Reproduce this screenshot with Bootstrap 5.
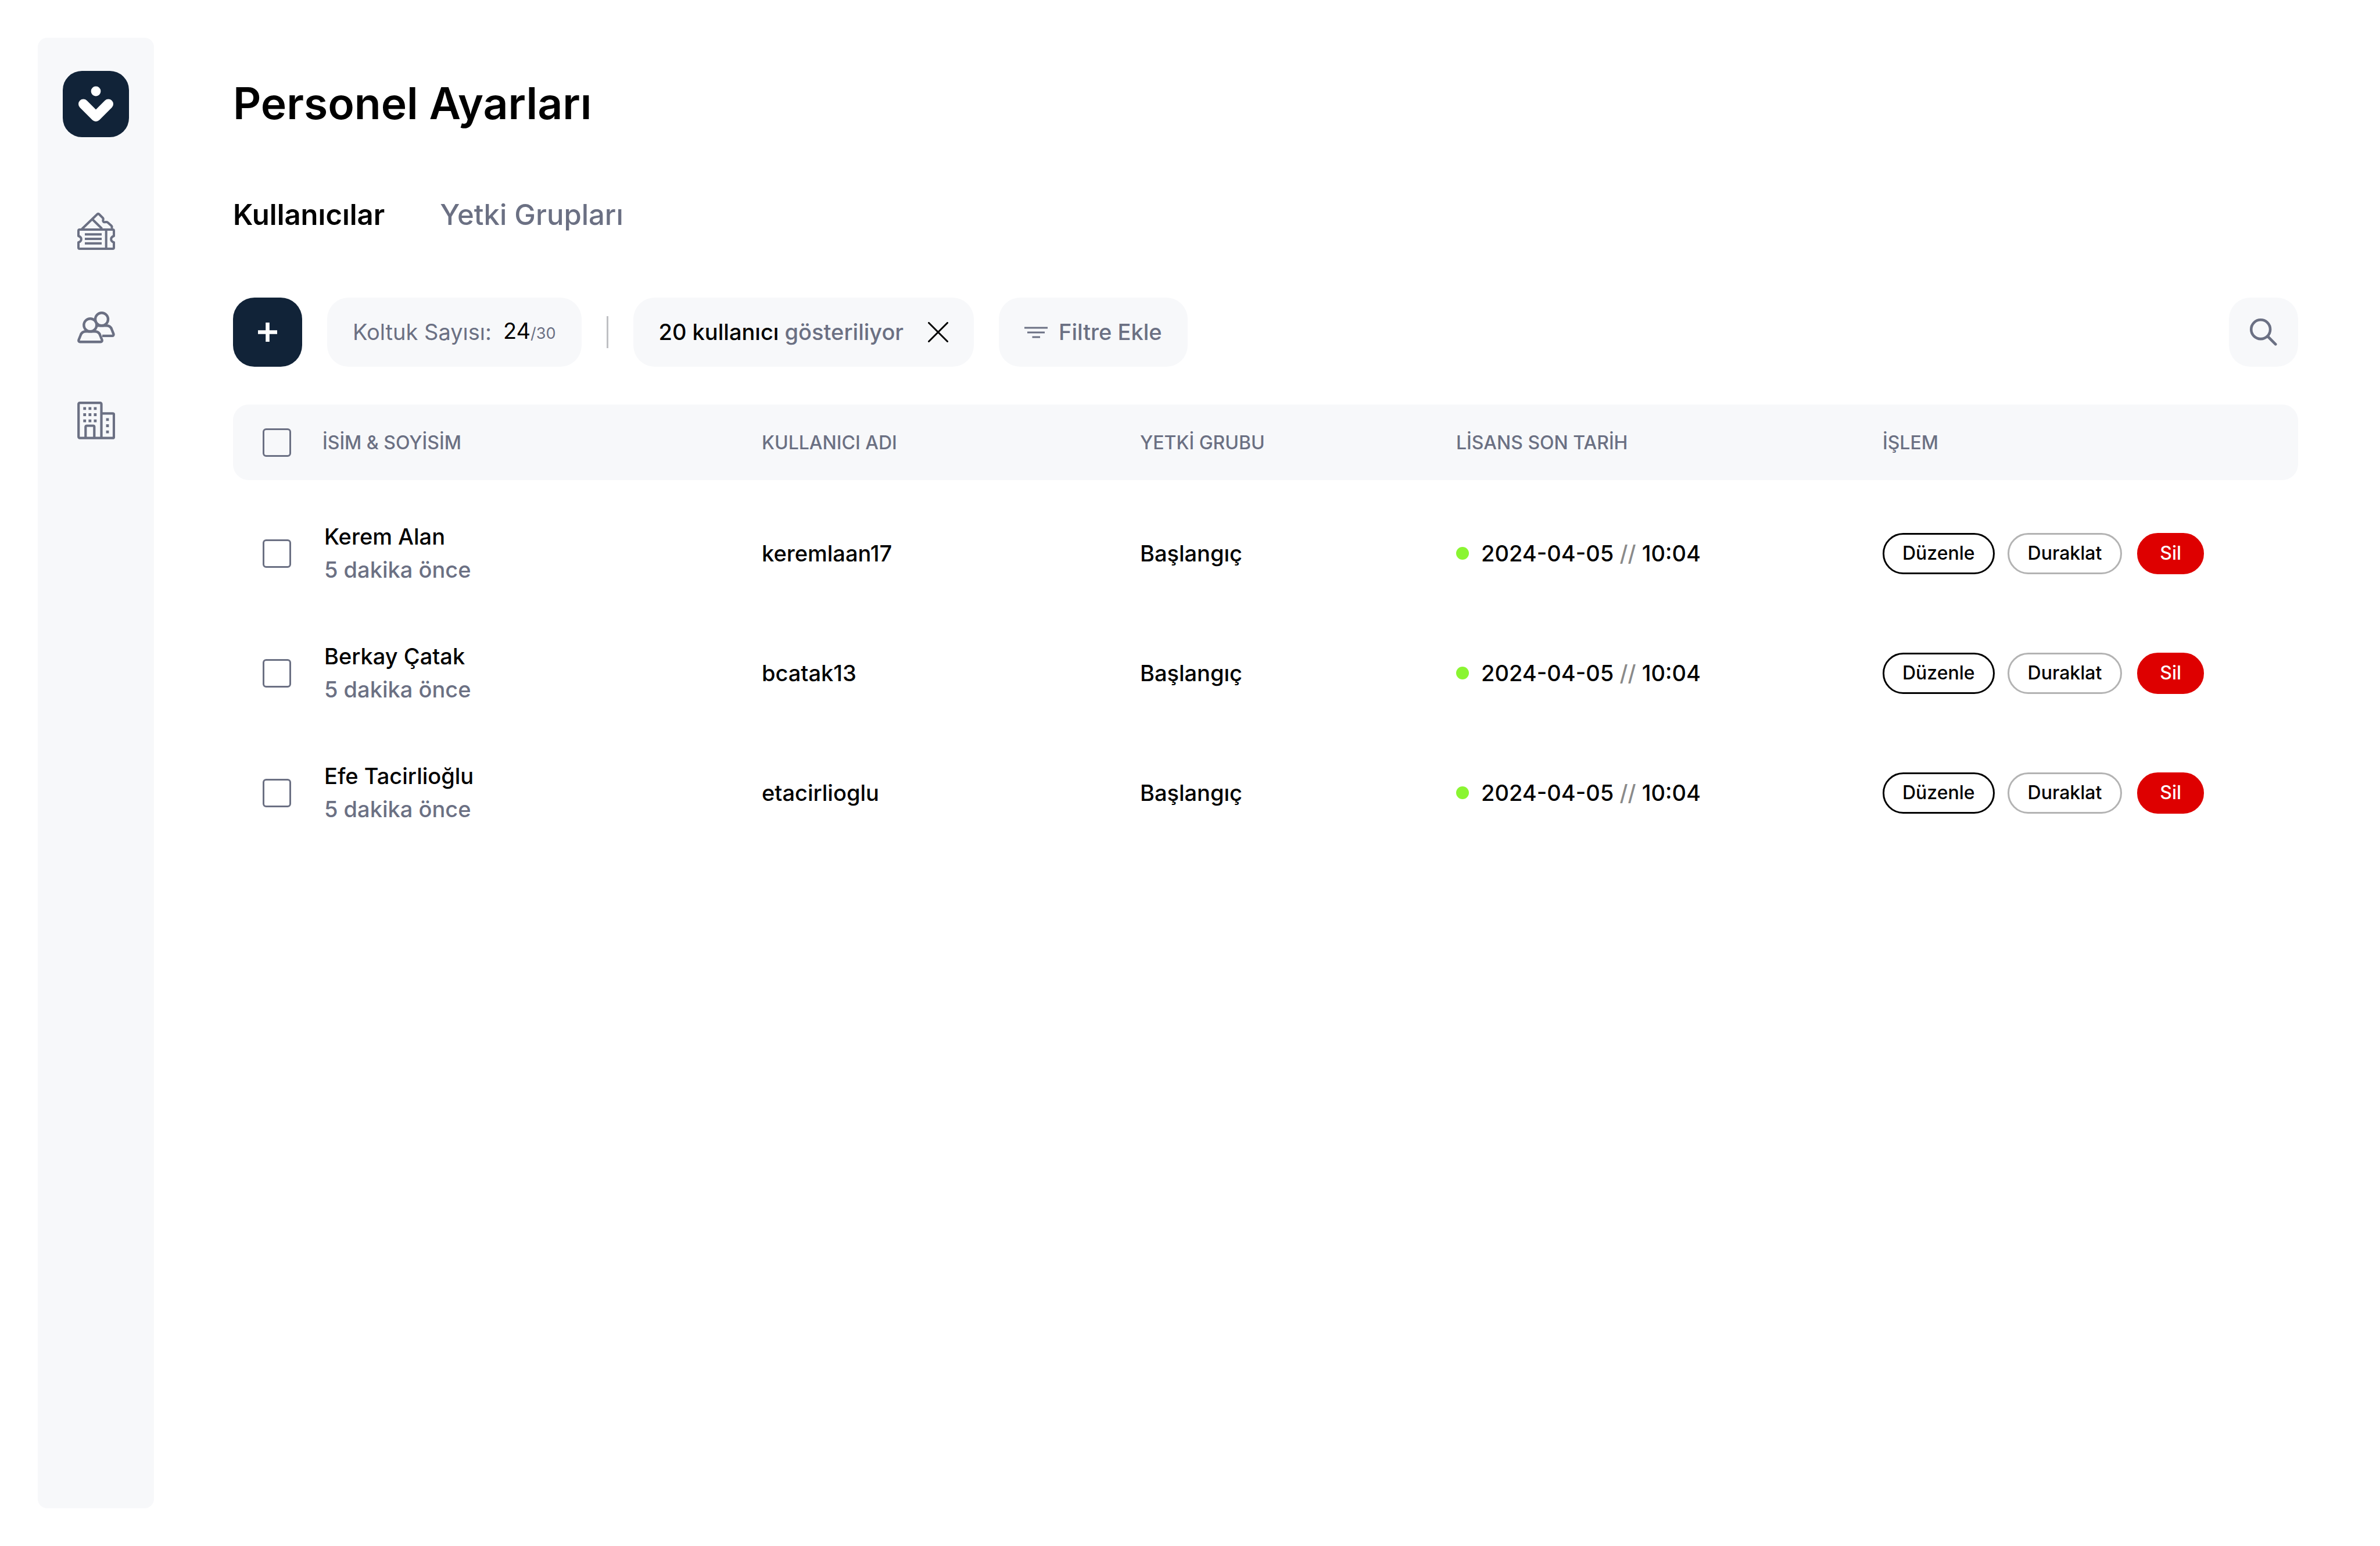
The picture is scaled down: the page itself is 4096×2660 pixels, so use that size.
<!DOCTYPE html>
<html lang="tr">
<head>
<meta charset="utf-8">
<meta name="viewport" content="width=device-width, initial-scale=1">
<title>Personel Ayarları</title>
<link href="https://cdn.jsdelivr.net/npm/bootstrap@5.3.0/dist/css/bootstrap.min.css" rel="stylesheet">
<style>
  :root { --ink: #000; --navy: #112338; --slate: #6b7083; --panel: #f7f8fa; }
  body { font-family: Inter, "Liberation Sans", sans-serif; font-size: 38px; line-height: 57px; font-weight: 500; color: var(--ink); background: #fff; }
  svg { display: block; flex: none; }
  .text-slate { color: var(--slate); }

  .app-shell { padding: 65px; gap: 136px; }
  .side-panel { flex: 0 0 200px; padding: 57px 0; background: var(--panel); border-radius: 16px; gap: 129px; }
  .side-links { gap: 100px; }
  .side-links a { color: var(--slate); }

  .page-body { min-width: 0; padding: 67px 76px 0 0; }
  .page-title { font-size: 75px; line-height: 92px; font-weight: 600; margin-bottom: 116px; }
  .tab-links { gap: 95px; margin-bottom: 112px; font-size: 49px; line-height: 60px; }
  .tab-links .nav-link { padding: 0; color: var(--slate); font-weight: 500; }
  .tab-links .nav-link.active { color: var(--ink); font-weight: 600; }

  .tool-row { gap: 43px; margin-bottom: 65px; }
  .tool-btn, .tool-chip { height: 119px; border: 0; border-radius: 37px; background: var(--panel); color: var(--slate); font-size: inherit; font-weight: 500; line-height: 57px; }
  .tool-btn { width: 119px; padding: 0; }
  .tool-btn.navy { background: var(--navy); color: #fff; }
  .tool-chip { padding: 0 44px; }
  .seat-chip { gap: 20px; font-weight: 400; }
  .seat-total { font-size: 27px; }
  .count-chip { gap: 42px; }
  .clear-btn { padding: 0; border: 0; border-radius: 0; color: var(--ink); }
  .filter-chip { gap: 19px; }
  .tool-rule { width: 3px; height: 55px; background: #bfc0c4; }

  .user-table { table-layout: fixed; border-collapse: separate; border-spacing: 0; --bs-table-bg: transparent; color: var(--ink); }
  .user-table > thead > tr > th { height: 130px; padding: 0; vertical-align: middle; background: var(--panel); color: var(--slate); font-size: 32px; font-weight: 500; }
  .user-table > thead > tr > th:first-child { border-radius: 27px 0 0 27px; }
  .user-table > thead > tr > th:last-child { border-radius: 0 27px 27px 0; }
  .user-table > tbody::before { content: ""; display: table-row; height: 23px; }
  .user-table > tbody > tr > td { height: 206px; padding: 0; color: var(--ink); }
  .user-table > :not(caption) > * > .pick-cell { padding-left: 51px; }
  .user-table > tbody > tr > .name-cell { padding-left: 3px; }
  .user-table .form-check-input { display: block; width: 49px; height: 49px; margin: 0; border: 3px solid var(--slate); border-radius: 6px; background-color: transparent; }
  .status-dot { width: 22px; height: 22px; background: #8af531; }
  .date-cell { gap: 21px; }
  .slashes { color: #8a8a8a; }
  .row-actions { gap: 22px; }
  .pill-btn { height: 71px; padding: 0 31px; border: 3px solid var(--ink); border-radius: 36px; font-size: 32px; line-height: 40px; font-weight: 500; color: var(--ink); }
  .pill-btn.quiet { padding: 0 32px; border-color: #b3b3b3; }
  .pill-btn.danger { padding: 0 36px; border-color: #de0000; background: #de0000; color: #fff; }
</style>
</head>
<body>
<div class="app-shell d-flex min-vh-100">
  <aside class="side-panel d-flex flex-column align-items-center">
    <a href="#" aria-label="Ana sayfa">
      <svg width="114" height="114" viewBox="0 0 114 114">
        <rect width="114" height="114" rx="33" fill="#112338"/>
        <circle cx="57" cy="35" r="8.4" fill="#fff"/>
        <path d="M35.5 57 57 78.500 78.500 57" fill="none" stroke="#fff" stroke-width="17" stroke-linecap="round" stroke-linejoin="round"/>
      </svg>
    </a>
    <nav class="side-links d-flex flex-column">
      <a href="#" aria-label="Biletler">
        <svg width="65" height="66" viewBox="0 0 65 66" fill="none" stroke="currentColor" stroke-width="4" stroke-linejoin="round">
          <path d="M4 30H61a2 2 0 0 1 2 2v9c-3 1-4.800 3-4.800 5.500s1.800 4.500 4.800 5.500v9a2 2 0 0 1-2 2H4a2 2 0 0 1-2-2v-9c3-1 4.800-3 4.800-5.500S5 42 2 41v-9a2 2 0 0 1 2-2z"/>
          <path d="M49.700 30v33M13 38.300h29M13 46h29M13 53.700h29"/>
          <path d="M8 29 34.500 3.500q1.500-1.400 3 0L44 10c1.200 1.200.8 2.200.4 3.600-.5 2.300.8 4 3.400 3.600 1.600-.2 3-.9 4.600.6l6.400 5.700q1.600 1.800 0 4.500M25.700 12 42.500 28.500"/>
        </svg>
      </a>
      <a href="#" aria-label="Kullanıcılar">
        <svg width="65" height="60" viewBox="0 0 65 60" fill="none" stroke="currentColor" stroke-width="4.400" stroke-linejoin="round">
          <circle cx="22.300" cy="28.300" r="11"/>
          <path d="M15 39.200H30c5 0 7.800 2 9.300 6.500l3.200 8.100c.6 2-.4 3.500-2.400 3.500H4.900c-2 0-3-1.500-2.400-3.500l3.200-8.100c1.500-4.500 4.300-6.500 9.300-6.500z"/>
          <circle cx="42" cy="18.300" r="11"/>
          <path d="M34 29.200H50c5 0 7.800 2 9.300 6.500l3 7.700c.6 2-.4 3.500-2.400 3.500H43"/>
        </svg>
      </a>
      <a href="#" aria-label="Şirketler">
        <svg width="65" height="66" viewBox="0 0 65 66" fill="none" stroke="currentColor" stroke-width="4.200" stroke-linejoin="round">
          <path d="M4 2.200H39.500a2 2 0 0 1 2 2V62.700H4.200a2 2 0 0 1-2-2V4.200a2 2 0 0 1 2-2zM41.500 20.300H61a2 2 0 0 1 2 2V60.700a2 2 0 0 1-2 2H41.500"/>
          <path d="M14.300 62V43.500a2 2 0 0 1 2-2H27.300a2 2 0 0 1 2 2V62"/>
          <path stroke-width="4.800" stroke-dasharray="4.800 4.300" d="M10.300 11.900h24M10.300 22.500h24M10.300 33.100h24"/>
          <path stroke-width="4.800" stroke-dasharray="4.800 5.900" d="M52 28.400v28"/>
        </svg>
      </a>
    </nav>
  </aside>

  <main class="page-body flex-grow-1">
    <h1 class="page-title">Personel Ayarları</h1>

    <nav class="tab-links nav">
      <a class="nav-link active" href="#" aria-current="page">Kullanıcılar</a>
      <a class="nav-link" href="#">Yetki Grupları</a>
    </nav>

    <div class="tool-row d-flex align-items-center">
      <button type="button" class="tool-btn navy btn d-flex align-items-center justify-content-center" aria-label="Kullanıcı ekle">
        <svg width="33" height="33" viewBox="0 0 33 33" stroke="currentColor" stroke-width="6.600"><path d="M16.500 0v33M0 16.500h33"/></svg>
      </button>
      <div class="tool-chip seat-chip d-flex align-items-center">
        <span>Koltuk Sayısı:</span>
        <span><span class="text-black">24</span><span class="seat-total">/30</span></span>
      </div>
      <div class="tool-rule"></div>
      <div class="tool-chip count-chip d-flex align-items-center">
        <span><span class="text-black">20 kullanıcı</span> gösteriliyor</span>
        <button type="button" class="clear-btn btn" aria-label="Temizle">
          <svg width="35" height="35" viewBox="0 0 35 35" stroke="currentColor" stroke-width="3" stroke-linecap="round"><path d="M1.500 1.500l32 32M33.500 1.500l-32 32"/></svg>
        </button>
      </div>
      <button type="button" class="tool-chip filter-chip btn d-flex align-items-center">
        <svg width="40" height="20" viewBox="0 0 40 20" stroke="currentColor" stroke-width="3"><path d="M0 2h40M5 10h30M13.500 18h13.500"/></svg>
        Filtre Ekle
      </button>
      <button type="button" class="tool-btn btn d-flex align-items-center justify-content-center ms-auto" aria-label="Ara">
        <svg width="47" height="47" viewBox="0 0 47 47" fill="none" stroke="currentColor" stroke-width="4.600" stroke-linecap="round"><circle cx="18.700" cy="18.700" r="16.400"/><path d="M30.500 30.500 44.300 44.300"/></svg>
      </button>
    </div>

    <table class="user-table table table-borderless align-middle mb-0">
      <colgroup>
        <col style="width:4.333%"><col style="width:21.272%"><col style="width:18.317%"><col style="width:15.307%"><col style="width:20.653%"><col>
      </colgroup>
      <thead>
        <tr>
          <th class="pick-cell"><input class="form-check-input" type="checkbox" aria-label="Tümünü seç"></th>
          <th scope="col">İSİM &amp; SOYİSİM</th>
          <th scope="col">KULLANICI ADI</th>
          <th scope="col">YETKİ GRUBU</th>
          <th scope="col">LİSANS SON TARİH</th>
          <th scope="col">İŞLEM</th>
        </tr>
      </thead>
      <tbody>
        <tr>
          <td class="pick-cell"><input class="form-check-input" type="checkbox" id="pick1"></td>
          <td class="name-cell"><label class="d-block" for="pick1">Kerem Alan</label><div class="text-slate">5 dakika önce</div></td>
          <td>keremlaan17</td>
          <td>Başlangıç</td>
          <td><div class="date-cell d-flex align-items-center"><span class="status-dot rounded-circle"></span><span>2024-04-05 <span class="slashes">//</span> 10:04</span></div></td>
          <td><div class="row-actions d-flex"><button type="button" class="pill-btn btn">Düzenle</button><button type="button" class="pill-btn quiet btn">Duraklat</button><button type="button" class="pill-btn danger btn ms-1">Sil</button></div></td>
        </tr>
        <tr>
          <td class="pick-cell"><input class="form-check-input" type="checkbox" id="pick2"></td>
          <td class="name-cell"><label class="d-block" for="pick2">Berkay Çatak</label><div class="text-slate">5 dakika önce</div></td>
          <td>bcatak13</td>
          <td>Başlangıç</td>
          <td><div class="date-cell d-flex align-items-center"><span class="status-dot rounded-circle"></span><span>2024-04-05 <span class="slashes">//</span> 10:04</span></div></td>
          <td><div class="row-actions d-flex"><button type="button" class="pill-btn btn">Düzenle</button><button type="button" class="pill-btn quiet btn">Duraklat</button><button type="button" class="pill-btn danger btn ms-1">Sil</button></div></td>
        </tr>
        <tr>
          <td class="pick-cell"><input class="form-check-input" type="checkbox" id="pick3"></td>
          <td class="name-cell"><label class="d-block" for="pick3">Efe Tacirlioğlu</label><div class="text-slate">5 dakika önce</div></td>
          <td>etacirlioglu</td>
          <td>Başlangıç</td>
          <td><div class="date-cell d-flex align-items-center"><span class="status-dot rounded-circle"></span><span>2024-04-05 <span class="slashes">//</span> 10:04</span></div></td>
          <td><div class="row-actions d-flex"><button type="button" class="pill-btn btn">Düzenle</button><button type="button" class="pill-btn quiet btn">Duraklat</button><button type="button" class="pill-btn danger btn ms-1">Sil</button></div></td>
        </tr>
      </tbody>
    </table>
  </main>
</div>
<script src="https://cdn.jsdelivr.net/npm/bootstrap@5.3.0/dist/js/bootstrap.bundle.min.js"></script>
</body>
</html>
